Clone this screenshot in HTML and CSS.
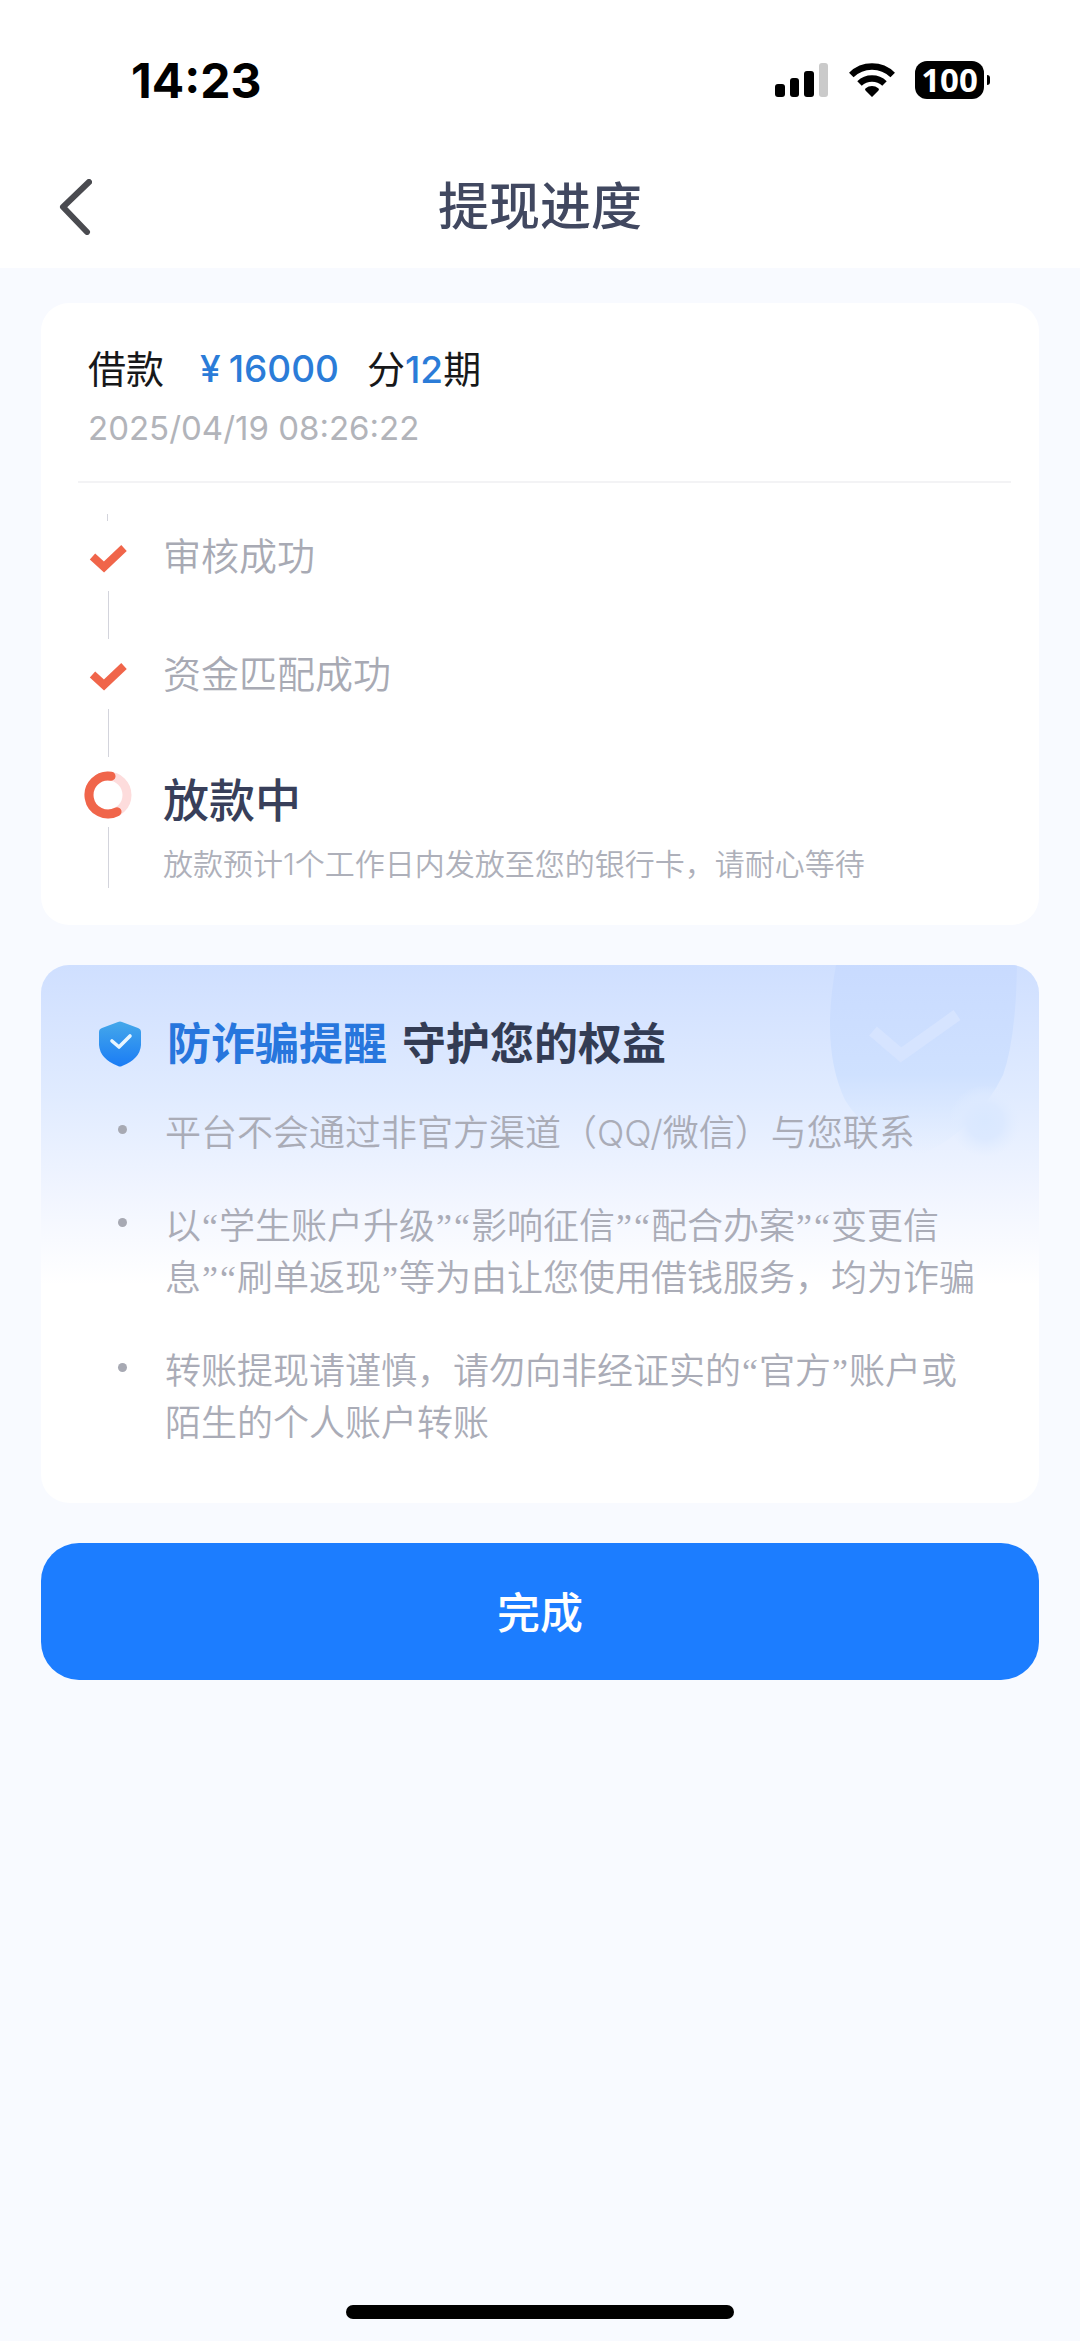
FILE: index.html
```html
<!DOCTYPE html>
<html lang="zh-CN">
<head>
<meta charset="utf-8">
<meta name="viewport" content="width=device-width, initial-scale=1">
<title>提现进度</title>
<link rel="stylesheet" href="styles.css">
</head>
<body>
<div class="screen">
  <header class="top">
    <div class="status">
      <time class="clock">14:23</time>
      <div class="status-icons">
        <svg class="signal" viewBox="0 0 54 34" aria-hidden="true">
          <rect x="0" y="21" width="10" height="13" rx="3"/>
          <rect x="15" y="15" width="9" height="19" rx="3"/>
          <rect x="29" y="8" width="10" height="26" rx="3"/>
          <rect x="44" y="0" width="9" height="34" rx="3" fill="#cacaca"/>
        </svg>
        <svg class="wifi" viewBox="0 0 46 34" aria-hidden="true">
          <path d="M23 34l-6.500-6.500a1.500 1.500 0 0 1 .2-2.200a10 10 0 0 1 12.600 0a1.500 1.500 0 0 1 .2 2.200z"/>
          <path d="M10.500 20.500a18 18 0 0 1 25 0" fill="none" stroke="#000" stroke-width="6.400"/>
          <path d="M2.300 12a29.500 29.500 0 0 1 41.400 0" fill="none" stroke="#000" stroke-width="6.400"/>
        </svg>
        <div class="battery"><span class="level">100</span></div>
      </div>
    </div>
    <div class="nav">
      <button class="back" type="button" aria-label="返回">
        <svg viewBox="0 0 34 56" aria-hidden="true"><path d="M31 3L5 28L29 53" fill="none" stroke="#4a4b50" stroke-width="6" stroke-linecap="round" stroke-linejoin="round"/></svg>
      </button>
      <h1 class="title">提现进度</h1>
    </div>
  </header>

  <main class="content">
    <section class="card loan">
      <div class="summary">
        <p class="amount"><span>借款</span><span class="money"><span>¥</span><span>16000</span></span><span class="term">分<b>12</b>期</span></p>
        <time class="date">2025/04/19 08:26:22</time>
      </div>
      <ol class="steps">
        <li class="step done">
          <span class="mark"><svg class="tick" viewBox="0 0 38 30" aria-hidden="true"><path d="M3.500 13.500L15 24L35 5" fill="none" stroke="#f0654a" stroke-width="8"/></svg></span>
          <div class="body"><p class="label">审核成功</p></div>
        </li>
        <li class="step done">
          <span class="mark"><svg class="tick" viewBox="0 0 38 30" aria-hidden="true"><path d="M3.500 13.500L15 24L35 5" fill="none" stroke="#f0654a" stroke-width="8"/></svg></span>
          <div class="body"><p class="label">资金匹配成功</p></div>
        </li>
        <li class="step current">
          <span class="mark"><svg class="ring" viewBox="0 0 48 48" aria-hidden="true"><circle cx="24" cy="24" r="19" fill="none" stroke="#fddcdc" stroke-width="9"/><path d="M27 5.200A19 19 0 1 0 33 40.700" fill="none" stroke="#f0654a" stroke-width="9" stroke-linecap="round"/></svg></span>
          <div class="body">
            <p class="label">放款中</p>
            <p class="note">放款预计1个工作日内发放至您的银行卡，请耐心等待</p>
          </div>
        </li>
      </ol>
    </section>

    <section class="card notice">
      <svg class="watermark" viewBox="0 0 240 240" aria-hidden="true">
        <defs>
          <linearGradient id="wm" x1="0" y1="0" x2="0" y2="1"><stop offset="0" stop-color="#c8daff"/><stop offset="0.600" stop-color="#cfe1ff"/><stop offset="1" stop-color="#dceaff" stop-opacity="0"/></linearGradient>
          <radialGradient id="puff"><stop offset="0" stop-color="#d9e8ff"/><stop offset="0.500" stop-color="#dce9ff"/><stop offset="1" stop-color="#e2edff" stop-opacity="0"/></radialGradient>
        </defs>
        <path d="M27 0H206Q206 80 192 120Q165 175 110 200Q55 180 34 145Q8 90 27 0Z" fill="url(#wm)"/>
        <circle cx="174" cy="166" r="36" fill="url(#puff)"/>
        <path d="M62 76L90 100L146 60" fill="none" stroke="#d6e4ff" stroke-width="12"/>
      </svg>
      <h2 class="notice-title">
        <svg class="shield" viewBox="0 0 42 46" aria-hidden="true">
          <defs><linearGradient id="sh" x1="0" y1="0" x2="0" y2="1"><stop offset="0" stop-color="#45a8ea"/><stop offset="1" stop-color="#1a7cf5"/></linearGradient></defs>
          <path d="M19 1Q21 0 23 1L39 7Q42 8 42 11V24Q41 38 23 45Q21 46 19 45Q1 38 0 24V11Q0 8 3 7Z" fill="url(#sh)"/>
          <path d="M13 20L20 26L31 15" fill="none" stroke="#e8f6ff" stroke-width="3.600" stroke-linecap="round" stroke-linejoin="round"/>
        </svg>
        <span class="accent">防诈骗提醒</span><span>守护您的权益</span>
      </h2>
      <ul class="tips">
        <li>平台不会通过非官方渠道（QQ/微信）与您联系</li>
        <li>以<span class="q">“</span>学生账户升级<span class="q">”</span><span class="q">“</span>影响征信<span class="q">”</span><span class="q">“</span>配合办案<span class="q">”</span><span class="q">“</span>变更信息<span class="q">”</span><span class="q">“</span>刷单返现<span class="q">”</span>等为由让您使用借钱服务，均为诈骗</li>
        <li>转账提现请谨慎，请勿向非经证实的<span class="q">“</span>官方<span class="q">”</span>账户或陌生的个人账户转账</li>
      </ul>
    </section>

    <button class="finish" type="button">完成</button>
  </main>

  <div class="home-bar"></div>
</div>
</body>
</html>
```

FILE: styles.css
```css
* { box-sizing: border-box; margin: 0; padding: 0; }

body {
  background: #f8faff;
  color: #17181a;
  font-family: Inter, "Noto Sans CJK SC", sans-serif;
}

button { border: 0; background: none; font: inherit; cursor: pointer; }

.screen { display: flex; flex-direction: column; min-height: 100vh; }

.top { background: #fff; padding-bottom: 14px; }

.status {
  display: flex;
  justify-content: space-between;
  align-items: center;
  height: 160px;
  padding: 0 90px 0 131px;
}
.clock { font-size: 48px; font-weight: 700; color: #000; }
.status-icons { display: flex; align-items: center; gap: 20px; }
.signal { width: 54px; height: 34px; }
.wifi { width: 46px; height: 34px; }
.battery {
  position: relative;
  width: 69px;
  height: 38px;
  margin-right: 6px;
  border-radius: 12px;
  background: #000;
  color: #fff;
  font: 700 33px/38px "Open Sans", sans-serif;
  text-align: center;
}
.battery::after {
  content: "";
  position: absolute;
  right: -6px;
  top: 14px;
  width: 3px;
  height: 10px;
  border-radius: 0 3px 3px 0;
  background: #000;
}

.nav {
  display: grid;
  grid-template-columns: 80px 1fr 80px;
  align-items: center;
  height: 94px;
  padding: 0 58px;
}
.back { display: flex; }
.back svg { width: 34px; height: 56px; }
.title {
  text-align: center;
  font-size: 51px;
  font-weight: 500;
  line-height: 76px;
  color: #414860;
}

.content { display: flex; flex-direction: column; gap: 40px; padding: 35px 41px; }
.card { border-radius: 28px; background: #fff; }

.loan { padding: 0 28px 37px 37px; }
.summary { padding: 40px 10px 31px; border-bottom: 2px solid #f3f3f5; }
.amount { display: flex; font-size: 38px; line-height: 52px; }
.money { display: flex; gap: 8px; margin: 0 28px 0 36px; }
.money, .term b { color: #2b7cd8; font-size: 37px; font-weight: 500; }
.date { display: block; margin-top: 10px; font-size: 33px; line-height: 44px; color: #b2b4ba; }

.steps { list-style: none; margin-left: 5px; padding-top: 31px; }
.steps::before, .mark::after { content: ""; display: block; width: 1px; background: #d3d4dc; }
.steps::before { height: 7px; margin-left: 24px; }
.step { display: flex; gap: 30px; min-height: 118px; }
.mark {
  display: flex;
  flex-direction: column;
  align-items: center;
  width: 50px;
}
.mark::after { flex: 1; }
.tick { width: 38px; height: 30px; margin: 22px 0 18px; }
.ring { width: 48px; height: 48px; margin: 14px 0 8px; }
.body { flex: 1; }
.label { font-size: 38px; font-weight: 350; line-height: 70px; color: #a8aab4; }
.current { min-height: 131px; }
.current .label { font-size: 46px; font-weight: 500; line-height: 86px; color: #383f5a; }
.note { font-size: 30px; font-weight: 350; line-height: 42px; color: #aeb0ba; }

.notice {
  position: relative;
  overflow: hidden;
  padding: 51px 54px 54px 58px;
  background: linear-gradient(#cfdfff, #e0ebff 130px, #f1f5ff 230px, #fff 320px);
}
.watermark { position: absolute; right: -12px; top: -10px; width: 240px; height: 240px; }
.notice-title {
  position: relative;
  display: flex;
  align-items: center;
  font-size: 44px;
  font-weight: 700;
  line-height: 56px;
  color: #333c54;
}
.shield { width: 42px; height: 46px; margin-right: 26px; }
.accent { margin-right: 15px; color: #2776dd; }
.tips {
  position: relative;
  display: grid;
  gap: 41px;
  margin-top: 35px;
  list-style: none;
  font-size: 36px;
  font-weight: 350;
  line-height: 52px;
  color: #aaacb7;
}
.tips li { position: relative; padding-left: 66px; }
.tips li::before {
  content: "";
  position: absolute;
  left: 19px;
  top: 18px;
  width: 9px;
  height: 9px;
  border-radius: 50%;
  background: #a7a9b3;
}
.q { padding: 0 1px; font-family: "Liberation Serif", serif; line-height: 1; }

.finish {
  height: 137px;
  padding-bottom: 4px;
  border-radius: 38px;
  background: #1c7dff;
  color: #fff;
  font-size: 43px;
  font-weight: 500;
}

.home-bar {
  width: 36%;
  height: 14px;
  margin: auto auto 22px;
  border-radius: 7px;
  background: #000;
}
```
